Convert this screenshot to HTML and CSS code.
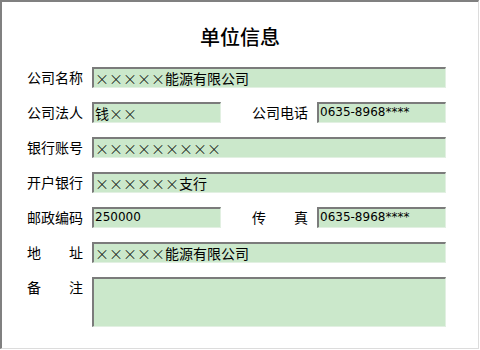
FILE: index.html
```html
<!DOCTYPE html>
<html lang="zh-CN">
<head>
<meta charset="utf-8">
<title>单位信息</title>
<link rel="stylesheet" href="styles.css">
</head>
<body>
<div class="window">
  <h1 class="title">单位信息</h1>
  <div class="form">
    <div class="row">
      <span class="label">公司名称</span>
      <div class="field full"><span class="x">×××××</span>能源有限公司</div>
    </div>
    <div class="row">
      <span class="label">公司法人</span>
      <div class="field half">钱<span class="x">××</span></div>
      <span class="label second">公司电话</span>
      <div class="field half num">0635-8968****</div>
    </div>
    <div class="row">
      <span class="label">银行账号</span>
      <div class="field full"><span class="x">×××××××××</span></div>
    </div>
    <div class="row">
      <span class="label">开户银行</span>
      <div class="field full"><span class="x">××××××</span>支行</div>
    </div>
    <div class="row">
      <span class="label">邮政编码</span>
      <div class="field half num">250000</div>
      <span class="label second">传 真</span>
      <div class="field half num">0635-8968****</div>
    </div>
    <div class="row">
      <span class="label">地 址</span>
      <div class="field full"><span class="x">×××××</span>能源有限公司</div>
    </div>
    <div class="row">
      <span class="label">备 注</span>
      <div class="field full memo"></div>
    </div>
  </div>
</div>
</body>
</html>
```

FILE: styles.css
```css
html, body {
  margin: 0;
  padding: 0;
  background: #ffffff;
}

.window {
  box-sizing: border-box;
  width: 479px;
  height: 349px;
  border-top: 2px solid #808080;
  border-left: 2px solid #808080;
  border-right: 1px solid #dcdcdc;
  border-bottom: 1px solid #dcdcdc;
  font-family: "Noto Sans CJK SC", "Liberation Sans", sans-serif;
  color: #000;
}

.title {
  margin: 21px 0 16px 0;
  height: 28px;
  line-height: 28px;
  font-size: 20px;
  font-weight: 500;
  text-align: center;
}

.form {
  display: flex;
  flex-direction: column;
  gap: 14px;
  padding-left: 25px;
}

.row {
  display: flex;
  align-items: flex-start;
}

.label {
  width: 56px;
  margin-right: 9px;
  font-size: 14px;
  line-height: 21px;
  height: 21px;
  text-align: justify;
  text-align-last: justify;
  white-space: nowrap;
}

.label.second {
  margin-left: 31px;
}

.field {
  box-sizing: border-box;
  height: 21px;
  background: #cbe8cb;
  border-top: 2px solid #7b7b7b;
  border-left: 2px solid #7b7b7b;
  border-right: 1px solid #e2f0e2;
  border-bottom: 1px solid #e2f0e2;
  padding-left: 1px;
  font-size: 14px;
  line-height: 18px;
  white-space: nowrap;
  overflow: hidden;
}

.x {
  font-weight: 300;
}

.field.full {
  width: 354px;
}

.field.half {
  width: 129px;
}

.field.num {
  font-family: "DejaVu Sans", sans-serif;
  font-size: 12px;
  line-height: 17px;
}

.field.memo {
  height: 50px;
}
```
